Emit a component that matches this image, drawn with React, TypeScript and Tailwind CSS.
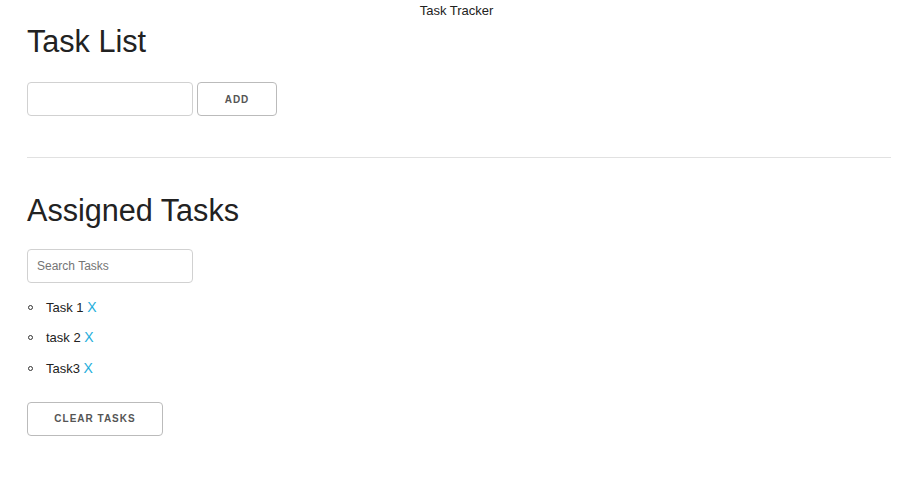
export default function App() {
  const tasks = ["Task 1", "task 2", "Task3"];

  return (
    <div className="min-h-screen bg-white text-[#222] font-['Liberation_Sans',Arial,sans-serif]">
      {/* top title */}
      <div className="pt-[3px] text-center text-[13px] leading-[16px]">Task Tracker</div>

      <div className="px-[27px] pr-[22px]">
        {/* Task List */}
        <h1 className="mt-[3px] text-[30.6px] leading-[39px] font-normal">Task List</h1>
        <div className="mt-[21px] flex gap-[4px]">
          <input
            type="text"
            className="h-[34px] w-[166px] rounded-[4px] border border-[#d1d1d1] bg-white px-[10px] text-[13px] outline-none"
          />
          <button className="h-[34px] w-[80px] rounded-[4px] border border-[#bbb] bg-transparent text-[10px] font-bold tracking-[1px] text-[#555]">
            ADD
          </button>
        </div>

        <hr className="mt-[41px] border-t border-[#e1e1e1]" />

        {/* Assigned Tasks */}
        <h2 className="mt-[33px] text-[30.6px] leading-[39px] font-normal">Assigned Tasks</h2>
        <input
          type="text"
          placeholder="Search Tasks"
          className="mt-[19px] block h-[34px] w-[166px] rounded-[4px] border border-[#d1d1d1] bg-white px-[9px] text-[12px] outline-none placeholder:text-[#757575]"
        />

        <ul className="mt-[14px] text-[13px] leading-[20px]">
          {tasks.map((t) => (
            <li key={t} className="mb-[10.5px] flex h-[20px] items-center">
              <span className="ml-[1px] mr-[13px] h-[5px] w-[5px] rounded-full border border-[#333]" />
              <span>
                {t} <a href="#" className="text-[14px] leading-[20px] text-[#1eaedb]">X</a>
              </span>
            </li>
          ))}
        </ul>

        <button className="mt-[13px] h-[34px] w-[136px] rounded-[4px] border border-[#bbb] bg-transparent text-[10px] font-bold tracking-[1px] text-[#555]">
          CLEAR TASKS
        </button>
      </div>
    </div>
  );
}
